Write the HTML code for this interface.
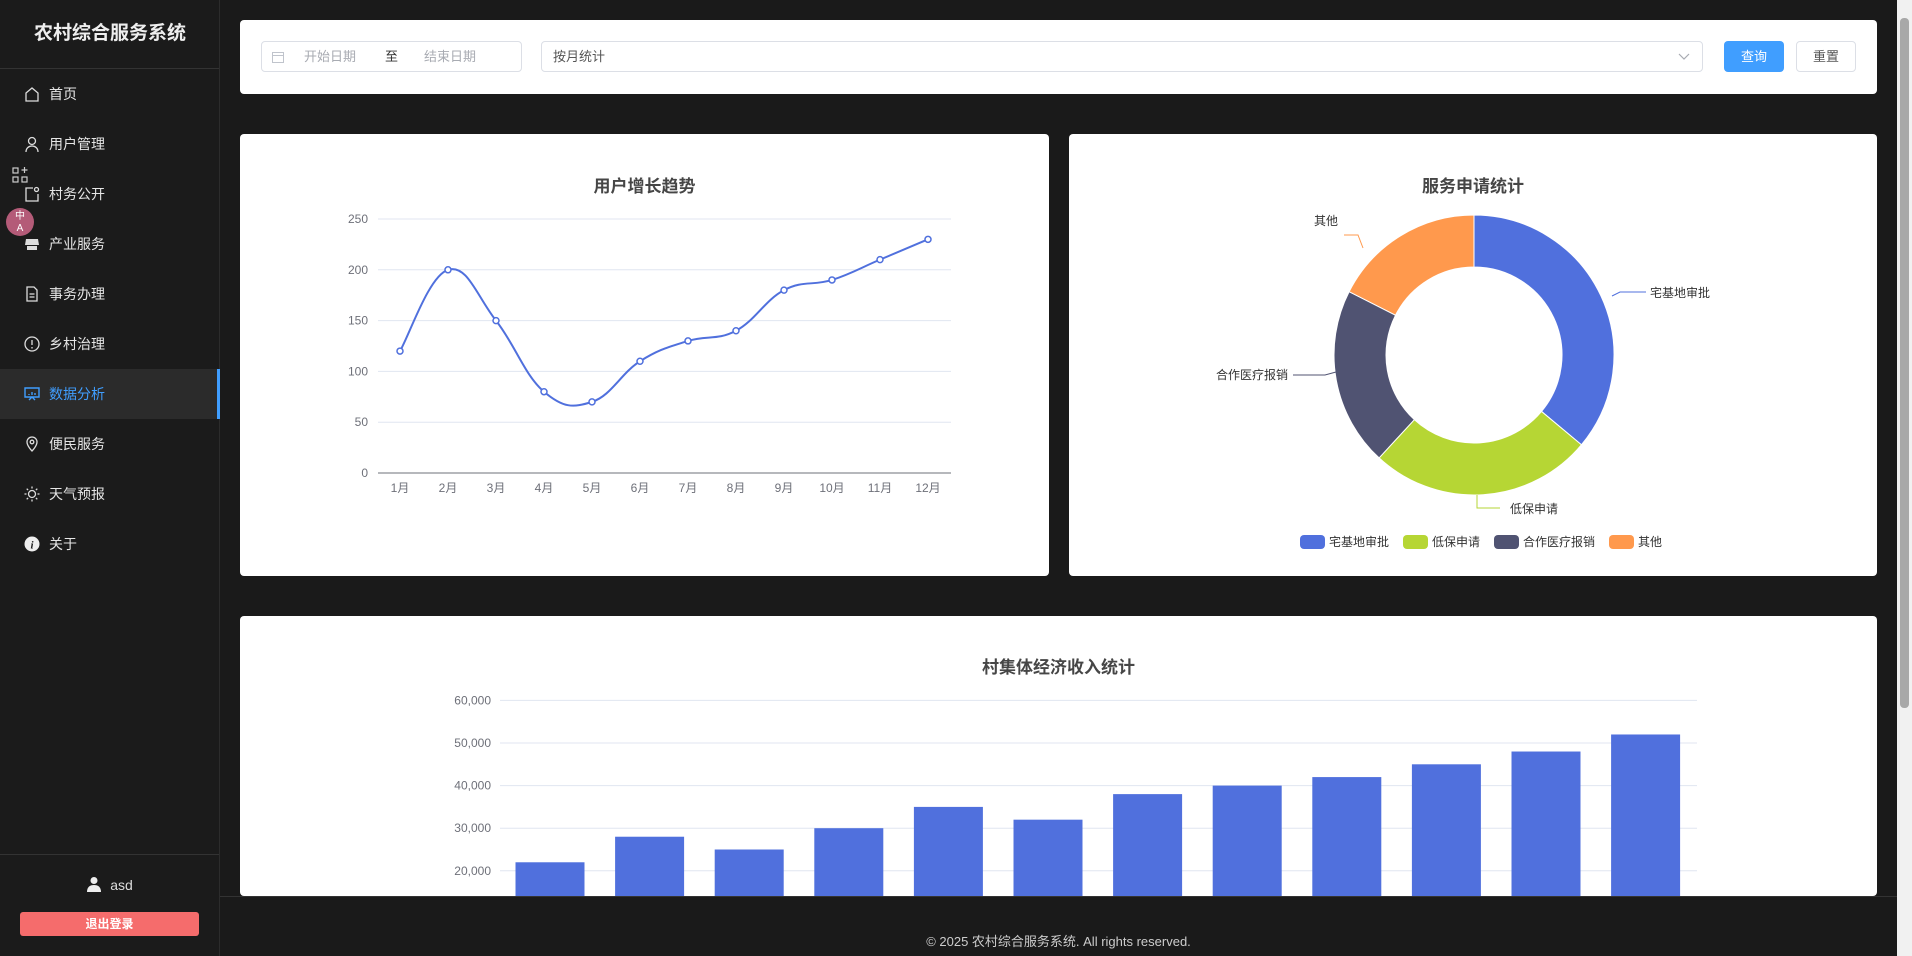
<!DOCTYPE html>
<html><head><meta charset="utf-8">
<style>
*{margin:0;padding:0;box-sizing:border-box}
html,body{width:1912px;height:956px;overflow:hidden}
body{background:#1a1a1a;font-family:"Liberation Sans","Noto Sans CJK SC",sans-serif;position:relative}
.side{position:absolute;left:0;top:0;width:220px;height:956px;background:#1b1b1b;border-right:1px solid #2c2c2c}
.title{position:absolute;top:20px;width:220px;text-align:center;color:#eee;font-size:19px;font-weight:bold;line-height:28px}
.hr{position:absolute;left:0;width:219px;height:1px;background:#333}
.item{position:absolute;left:0;width:219px;height:50px;color:#e6e6e6;font-size:14px;line-height:50px;padding-left:49px}
.item svg{position:absolute;left:24px;top:17px}
.item.act{background:#2b2b2b;color:#409eff;border-right:3px solid #409eff;width:220px}
.card{position:absolute;background:#fff;border-radius:4px}
.inp{position:absolute;border:1px solid #dcdfe6;border-radius:4px;height:31px;font-size:13px;line-height:29px;color:#a8abb2}
.btn{position:absolute;height:31px;border-radius:4px;font-size:13px;line-height:31px;text-align:center}
.ctitle{position:absolute;width:100%;text-align:center;font-size:17px;font-weight:bold;color:#464646}
</style></head><body>
<div class="side">
<div class="title">农村综合服务系统</div>
<div class="hr" style="top:68px"></div>
<div class="item" style="top:69px"><svg width="16" height="16" viewBox="0 0 16 16" fill="none" stroke="#ddd" stroke-width="1.3"><path d="M2 7L8 2l6 5v8H2z"/></svg>首页</div>
<div class="item" style="top:119px"><svg width="16" height="16" viewBox="0 0 16 16" fill="none" stroke="#ddd" stroke-width="1.3"><circle cx="8" cy="5" r="3.5"/><path d="M2 16c0-4 3-6 6-6s6 2 6 6"/></svg>用户管理</div>
<div class="item" style="top:169px"><svg width="16" height="16" viewBox="0 0 16 16" fill="none" stroke="#ddd" stroke-width="1.3"><path d="M9 2H2v13h12V8"/><circle cx="12.5" cy="3.5" r="2"/></svg>村务公开</div>
<div class="item" style="top:219px"><svg width="16" height="16" viewBox="0 0 16 16" fill="#ddd"><path d="M2 3h12l1 6H1z"/><rect x="3" y="10" width="10" height="4"/></svg>产业服务</div>
<div class="item" style="top:269px"><svg width="16" height="16" viewBox="0 0 16 16" fill="none" stroke="#ddd" stroke-width="1.3"><path d="M3 1h7l3 3v11H3z M5.5 8h5M5.5 11h5"/></svg>事务办理</div>
<div class="item" style="top:319px"><svg width="16" height="16" viewBox="0 0 16 16" fill="none" stroke="#ddd" stroke-width="1.3"><circle cx="8" cy="8" r="7"/><path d="M8 4v5M8 11v1.5"/></svg>乡村治理</div>
<div class="item act" style="top:369px"><svg width="16" height="16" viewBox="0 0 16 16" fill="none" stroke="#409eff" stroke-width="1.4"><path d="M1 2h14v9H1zM5 14l3-3 3 3M5 8v1M8 6v3M11 7v2"/></svg>数据分析</div>
<div class="item" style="top:419px"><svg width="16" height="16" viewBox="0 0 16 16" fill="none" stroke="#ddd" stroke-width="1.3"><path d="M8 15s5-5 5-9A5 5 0 0 0 3 6c0 4 5 9 5 9z"/><circle cx="8" cy="6" r="1.8"/></svg>便民服务</div>
<div class="item" style="top:469px"><svg width="16" height="16" viewBox="0 0 16 16" fill="none" stroke="#ddd" stroke-width="1.3"><circle cx="8" cy="8" r="3.5"/><path d="M8 0.5v2M8 13.5v2M0.5 8h2M13.5 8h2M2.7 2.7l1.4 1.4M11.9 11.9l1.4 1.4M2.7 13.3l1.4-1.4M11.9 4.1l1.4-1.4"/></svg>天气预报</div>
<div class="item" style="top:519px"><svg width="16" height="16" viewBox="0 0 16 16"><circle cx="8" cy="8" r="7.5" fill="#eee"/><text x="8" y="12.5" font-size="11" font-weight="bold" font-style="italic" text-anchor="middle" fill="#1b1b1b" font-family="Liberation Serif">i</text></svg>关于</div>
<svg style="position:absolute;left:12px;top:167px" width="17" height="17" viewBox="0 0 17 17" fill="none" stroke="#ccc" stroke-width="1.2"><rect x="1" y="1" width="5" height="5"/><rect x="1" y="10" width="5" height="5"/><rect x="10" y="10" width="5" height="5"/><path d="M12.5 0v6M9.5 3h6"/></svg>
<div style="position:absolute;left:6px;top:208px;width:28px;height:28px;border-radius:50%;background:#b45b78;color:#fff;font-size:10px;line-height:12px;text-align:center;padding-top:3px">中<br>A</div>
<div class="hr" style="top:854px"></div>
<div style="position:absolute;top:874px;left:0;width:219px;text-align:center;color:#ddd;font-size:14px;line-height:22px"><svg width="16" height="16" viewBox="0 0 16 16" style="vertical-align:-2px;margin-right:8px" fill="#eee"><circle cx="8" cy="4.5" r="3.5"/><path d="M1 16c0-5 3-7 7-7s7 2 7 7z"/></svg>asd</div>
<div style="position:absolute;left:20px;top:912px;width:179px;height:24px;background:#f56c6c;border-radius:3px;color:#fff;font-size:12px;font-weight:bold;text-align:center;line-height:24px">退出登录</div>
</div>

<div class="card" style="left:240px;top:20px;width:1637px;height:74px">
<div class="inp" style="left:21px;top:21px;width:261px"><svg style="position:absolute;left:10px;top:9px" width="12" height="12" viewBox="0 0 12 12" fill="none" stroke="#c0c4cc"><rect x="0.5" y="1.5" width="11" height="10"/><path d="M0.5 4.5h11"/></svg><span style="position:absolute;left:42px">开始日期</span><span style="position:absolute;left:123px;color:#333">至</span><span style="position:absolute;left:162px">结束日期</span></div>
<div class="inp" style="left:301px;top:21px;width:1162px;color:#555;padding-left:11px">按月统计<svg style="position:absolute;right:12px;top:11px" width="12" height="8" viewBox="0 0 12 8" fill="none" stroke="#a8abb2" stroke-width="1.2"><path d="M1 1l5 5 5-5"/></svg></div>
<div class="btn" style="left:1484px;top:21px;width:60px;background:#409eff;color:#fff">查询</div>
<div class="btn" style="left:1556px;top:21px;width:60px;border:1px solid #dcdfe6;color:#555;line-height:29px">重置</div>
</div>

<div class="card" style="left:240px;top:134px;width:809px;height:442px">
<div class="ctitle" style="top:38px">用户增长趋势</div>
<svg id="line" style="position:absolute;left:-240px;top:-134px" width="1912" height="956"></svg>
</div>

<div class="card" style="left:1069px;top:134px;width:808px;height:442px">
<div class="ctitle" style="top:38px">服务申请统计</div>
<svg id="pie" style="position:absolute;left:-1069px;top:-134px" width="1912" height="956"></svg>
</div>

<div class="card" style="left:240px;top:616px;width:1637px;height:280px;overflow:hidden">
<div class="ctitle" style="top:37px">村集体经济收入统计</div>
<svg id="bar" style="position:absolute;left:-240px;top:-616px" width="1912" height="956"></svg>
</div>

<div style="position:absolute;left:220px;top:896px;width:1677px;height:60px;background:#1a1a1a;border-top:1px solid #333;color:#ccc;font-size:13px;text-align:center;line-height:30px;padding-top:30px">© 2025 农村综合服务系统. All rights reserved.</div>
<div style="position:absolute;left:1897px;top:0;width:15px;height:956px;background:#f1f1f1"></div>
<div style="position:absolute;left:1900px;top:18px;width:9px;height:690px;background:#a8a8a8;border-radius:4px"></div>

<script>
var NS='http://www.w3.org/2000/svg';
function el(svg,tag,attrs,txt){var e=document.createElementNS(NS,tag);for(var k in attrs)e.setAttribute(k,attrs[k]);if(txt!=null)e.textContent=txt;svg.appendChild(e);return e;}
var F='Liberation Sans, Noto Sans CJK SC, sans-serif';
var L=document.getElementById('line');
for(var i=0;i<=5;i++){var v=i*50,y=473-v*1.016;
 el(L,'line',{x1:378,x2:951,y1:y,y2:y,stroke:i?'#e0e6f1':'#6e7079','stroke-width':1});
 el(L,'text',{x:368,y:y+4,'text-anchor':'end','font-size':12,fill:'#6e7079','font-family':F},v);}
var vals=[120,200,150,80,70,110,130,140,180,190,210,230],P=[];
for(i=0;i<12;i++){var x=400+48*i;P.push([x,473-vals[i]*1.016]);
 el(L,'text',{x:x,y:492,'text-anchor':'middle','font-size':12,fill:'#6e7079','font-family':F},(i+1)+'月');}
var d='M'+P[0][0]+','+P[0][1];
for(i=0;i<11;i++){var p0=P[Math.max(i-1,0)],p1=P[i],p2=P[i+1],p3=P[Math.min(i+2,11)],t=0.2;
 d+=' C'+(p1[0]+(p2[0]-p0[0])*t)+','+(p1[1]+(p2[1]-p0[1])*t)+' '+(p2[0]-(p3[0]-p1[0])*t)+','+(p2[1]-(p3[1]-p1[1])*t)+' '+p2[0]+','+p2[1];}
el(L,'path',{d:d,fill:'none',stroke:'#5070dd','stroke-width':2});
P.forEach(function(p){el(L,'circle',{cx:p[0],cy:p[1],r:3,fill:'#fff',stroke:'#5070dd','stroke-width':1.5});});
var S=document.getElementById('pie'),cx=1474,cy=355,R=140,r=88;
var data=[['宅基地审批',35,'#5070dd'],['低保申请',25,'#b6d634'],['合作医疗报销',20,'#505372'],['其他',17,'#ff994d']],tot=97,a=0;
function pt(ang,rad){return [cx+rad*Math.sin(ang),cy-rad*Math.cos(ang)];}
data.forEach(function(s){var a2=a+s[1]/tot*2*Math.PI,lg=(a2-a)>Math.PI?1:0;
 var o1=pt(a,R),o2=pt(a2,R),i1=pt(a2,r),i2=pt(a,r);
 el(S,'path',{d:'M'+o1+' A'+R+','+R+' 0 '+lg+' 1 '+o2+' L'+i1+' A'+r+','+r+' 0 '+lg+' 0 '+i2+'Z',fill:s[2],stroke:'#fff','stroke-width':1});
 a=a2;});
el(S,'path',{d:'M1612,296 L1620,292 L1646,292',fill:'none',stroke:'#5070dd'});
el(S,'text',{x:1650,y:297,'font-size':12,fill:'#333','font-family':F},'宅基地审批');
el(S,'path',{d:'M1477,495 L1477,508 L1500,508',fill:'none',stroke:'#b6d634'});
el(S,'text',{x:1510,y:513,'font-size':12,fill:'#333','font-family':F},'低保申请');
el(S,'path',{d:'M1336,372 L1325,375 L1293,375',fill:'none',stroke:'#505372'});
el(S,'text',{x:1288,y:379,'text-anchor':'end','font-size':12,fill:'#333','font-family':F},'合作医疗报销');
el(S,'path',{d:'M1363,248 L1358,235 L1344,235',fill:'none',stroke:'#ff994d'});
el(S,'text',{x:1338,y:225,'text-anchor':'end','font-size':12,fill:'#333','font-family':F},'其他');
var lx=1300;data.forEach(function(s){el(S,'rect',{x:lx,y:535,width:25,height:14,rx:4,fill:s[2]});
 el(S,'text',{x:lx+29,y:546,'font-size':12,fill:'#333','font-family':F},s[0]);lx+=29+s[0].length*12+14;});
var B=document.getElementById('bar');
for(i=0;i<=6;i++){var y=956-i*42.6;
 el(B,'line',{x1:500,x2:1697,y1:y,y2:y,stroke:'#e0e6f1'});
 el(B,'text',{x:491,y:y+4,'text-anchor':'end','font-size':12,fill:'#6e7079','font-family':F},i===0?'0':(i*10)+',000');}
var bv=[22,28,25,30,35,32,38,40,42,45,48,52];
bv.forEach(function(v,i){var c=550+99.6*i,h=v*4.26;el(B,'rect',{x:c-34.5,y:956-h,width:69,height:h,fill:'#5070dd'});});
</script>
</body></html>
